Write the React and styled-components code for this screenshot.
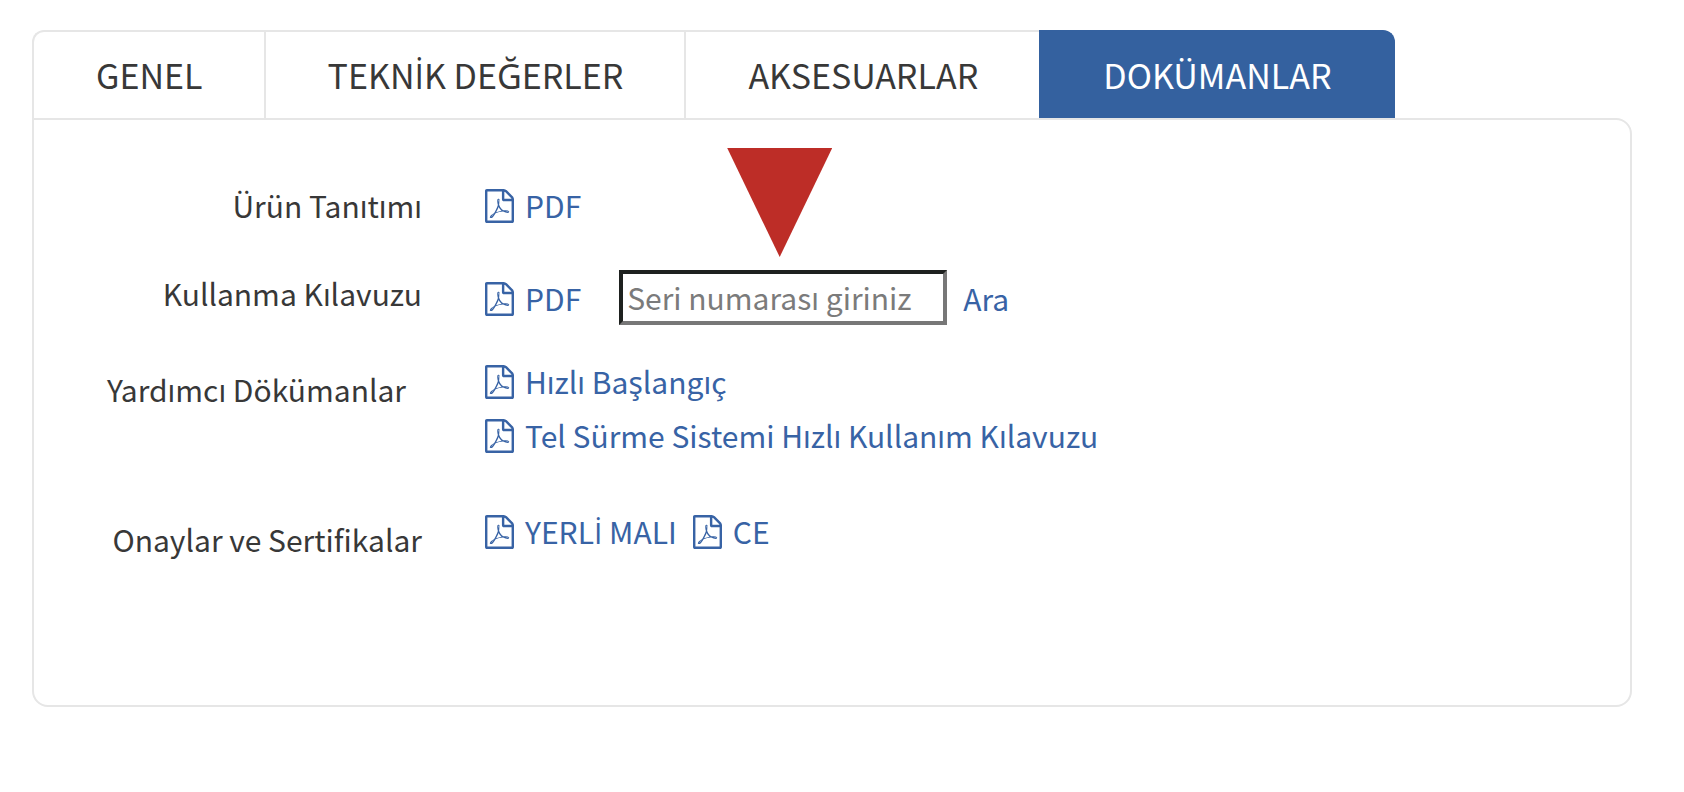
import React, { useState } from 'react';
import styled, { createGlobalStyle } from 'styled-components';

const GlobalStyle = createGlobalStyle`
  * {
    box-sizing: border-box;
  }
  body {
    margin: 0;
    background: #fff;
    color: #383838;
    font-family: "Noto Sans CJK SC", "Noto Sans", sans-serif;
    font-size: 30px;
  }
`

const StyledWrapper = styled.main`
  padding: 30px 52px 84px 32px;
`
const TabList = styled.div`
  display: flex;
`
const Tab = styled.button`
  height: 88px;
  padding: 0 61px 2px 62px;
  border: 0 solid #e6e6e6;
  border-top-width: 2px;
  border-left-width: 2px;
  background: #fff;
  color: #383838;
  font: inherit;
  font-size: 34px;
  white-space: nowrap;
  cursor: pointer;

  &:first-child {
    border-top-left-radius: 12px;
  }
  &:last-child {
    border-right-width: 2px;
    border-top-right-radius: 12px;
  }
  &[aria-selected='true'] {
    border-color: #34619f;
    background: #34619f;
    color: #fff;
  }
`
const DottedI = styled.span`
  font-family: "Open Sans", sans-serif;
  line-height: 1;
`
const Panel = styled.section`
  display: flex;
  flex-direction: column;
  padding: 58px 16px 139px 0;
  border: 2px solid #e6e6e6;
  border-radius: 0 16px 16px 16px;
  border-top-left-radius: 0;
`
const Row = styled.div`
  display: grid;
  grid-template-columns: 388px 1fr;
  column-gap: 63px;
  align-items: start;
  margin-bottom: ${({ $space }) => $space || 0}px;
`
const RowLabel = styled.label`
  padding-top: ${({ $low }) => ($low ? 8 : 0)}px;
  padding-right: ${({ $inset }) => ($inset ? 16 : 0)}px;
  line-height: 54px;
  text-align: right;
`
const Links = styled.div`
  display: flex;
  flex-direction: ${({ $stacked }) => ($stacked ? 'column' : 'row')};
  align-items: ${({ $stacked }) => ($stacked ? 'flex-start' : 'center')};
  column-gap: 16px;
`
const DocLink = styled.a`
  display: inline-flex;
  align-items: center;
  gap: 11px;
  color: #3863a5;
  line-height: 54px;
  text-decoration: none;

  svg {
    margin-top: 2px;
  }
`
const SearchRow = styled(Links)`
  padding-top: 4px;
`
const Search = styled.form`
  position: relative;
  display: flex;
  align-items: center;
  gap: 16px;
  margin-left: 22px;
`
const SerialInput = styled.input`
  width: 328px;
  height: 55px;
  padding: 0 4px 2px;
  border: 4px solid;
  border-color: #1e211f #777 #777 #1e211f;
  border-radius: 0;
  background: #fff;
  color: #383838;
  font: inherit;

  &::placeholder {
    color: #7b7b7b;
    opacity: 1;
  }
`
const SearchButton = styled.button`
  padding: 0;
  border: 0;
  background: none;
  color: #3863a5;
  font: inherit;
  line-height: 54px;
  cursor: pointer;
`
const Pointer = styled.span`
  position: absolute;
  bottom: calc(100% + 13px);
  left: 108px;
  width: 105px;
  height: 109px;
  background: #bd2d27;
  clip-path: polygon(0 0, 100% 0, 50% 100%);
`

const PdfIcon = () => (
    <svg width="29" height="34" viewBox="0 0 1536 1792" fill="currentColor" aria-hidden="true">
        <path d="M1468 380q28 28 48 76t20 88v1152q0 40-28 68t-68 28h-1344q-40 0-68-28t-28-68v-1600q0-40 28-68t68-28h896q40 0 88 20t76 48zm-444-244v376h376q-10-29-22-41l-313-313q-12-12-41-22zm384 1528v-1024h-416q-40 0-68-28t-28-68v-416h-768v1536h1280zm-514-593q33 26 84 56 59-7 117-7 147 0 177 49 16 22 2 52 0 1-1 2l-2 2v1q-6 38-71 38-48 0-115-20t-130-53q-221 24-392 83-153 262-242 262-15 0-28-7l-24-12q-1-1-6-5-10-10-6-36 9-40 56-91.5t132-96.5q14-9 23 6 2 2 2 4 52-85 107-197 68-136 104-262-24-82-30.500-159.500t6.500-127.500q11-40 42-40h22q23 0 35 15 18 21 9 68-2 6-4 8 1 3 1 8v30q-2 123-14 192 55 164 146 238zm-576 411q52-24 137-158-51 40-87.500 84t-49.500 74zm398-920q-15 42-2 132 1-7 7-44 0-3 7-43 1-4 4-8-1-1-1-2-1-2-1-3-1-22-13-36 0 1-1 2v2zm-124 661q135-54 284-81-2-1-13-9.500t-16-13.500q-76-67-127-176-27 86-83 197-30 56-45 83zm646-16q-24-24-140-24 76 28 124 28 14 0 18-1 0-1-2-3z" />
    </svg>
)

const Caps = ({ text }) => text.split(/(İ)/).map((part, i) => (
    part === 'İ' ? <DottedI key={i}>{part}</DottedI> : part
))

const Doc = ({ text }) => (
    <DocLink href="#"><PdfIcon/><span><Caps text={text}/></span></DocLink>
)

const tabs = ['GENEL', 'TEKNİK DEĞERLER', 'AKSESUARLAR', 'DOKÜMANLAR'];

const App = () => {
    const [active, setActive] = useState('DOKÜMANLAR');

    return (
       <StyledWrapper lang="tr">
           <GlobalStyle/>

           <TabList role="tablist">
                 {tabs.map(tab => (
                     <Tab key={tab} type="button" role="tab" aria-selected={tab === active} onClick={() => setActive(tab)}>
                         <Caps text={tab}/>
                     </Tab>
                 ))}
           </TabList>

           <Panel role="tabpanel">
                 <Row $space={34}>
                     <RowLabel as="span">Ürün Tanıtımı</RowLabel>
                     <Links><Doc text="PDF"/></Links>
                 </Row>

                 <Row $space={29}>
                     <RowLabel htmlFor="serial">Kullanma Kılavuzu</RowLabel>
                     <SearchRow>
                         <Doc text="PDF"/>
                         <Search onSubmit={e => e.preventDefault()}>
                             <Pointer/>
                             <SerialInput id="serial" type="text" placeholder="Seri numarası giriniz"/>
                             <SearchButton type="submit">Ara</SearchButton>
                         </Search>
                     </SearchRow>
                 </Row>

                 <Row $space={42}>
                     <RowLabel as="span" $low $inset>Yardımcı Dökümanlar</RowLabel>
                     <Links $stacked>
                         <Doc text="Hızlı Başlangıç"/>
                         <Doc text="Tel Sürme Sistemi Hızlı Kullanım Kılavuzu"/>
                     </Links>
                 </Row>

                 <Row>
                     <RowLabel as="span" $low>Onaylar ve Sertifikalar</RowLabel>
                     <Links>
                         <Doc text="YERLİ MALI"/>
                         <Doc text="CE"/>
                     </Links>
                 </Row>
           </Panel>
       </StyledWrapper>
     );
}

export default App;
